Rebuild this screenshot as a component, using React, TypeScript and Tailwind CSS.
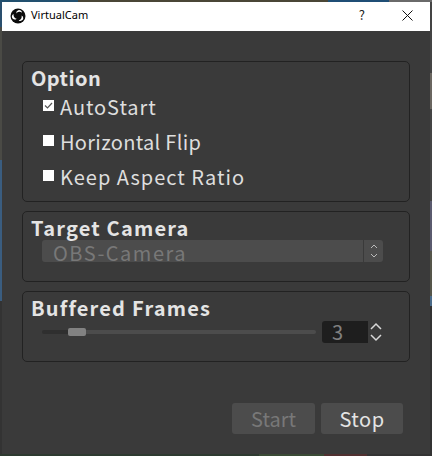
import React from "react";

const font = { fontFamily: '"Noto Sans CJK JP", "Noto Sans", sans-serif' };

function Check({ checked, label, tracking }: { checked?: boolean; label: string; tracking: string }) {
  return (
    <div className="flex items-center h-[35px]">
      <div className="w-[11px] h-[11px] bg-white mr-[6px] flex items-center justify-center shrink-0">
        {checked && (
          <svg width="9" height="9" viewBox="0 0 9 9" fill="none">
            <path d="M1 4.5 L3.5 7 L8 2" stroke="#555" strokeWidth="1.2" />
          </svg>
        )}
      </div>
      <span className={"text-[20px] text-[#dedede] leading-none mt-[2px] " + tracking}>{label}</span>
    </div>
  );
}

function Group({ title, className, tracking, children }: { title: string; className: string; tracking: string; children: React.ReactNode }) {
  return (
    <div className={"border border-[#222222] rounded-[5px] mx-[20px] pl-[8px] " + className}>
      <div className={"text-[20px] font-bold leading-none text-[#e4e4e4] pt-[6px] " + tracking}>{title}</div>
      {children}
    </div>
  );
}

export default function App() {
  return (
    <div
      className="w-[432px] h-[456px] p-[2px] overflow-hidden [background:linear-gradient(90deg,#22506f_0_18%,#4a4636_18%_76%,#1f4e75_76%_90%,#6a6a6a_90%)_top/100%_2px_no-repeat,linear-gradient(90deg,#2e3a30_0_60%,#3a4a35_60%_75%,#503030_75%_85%,#333_85%)_bottom/100%_2px_no-repeat,linear-gradient(180deg,#2a4f6e_0_6%,#4a4a45_6%_35%,#3a5d80_35%_66%,#333333_66%)_left/2px_100%_no-repeat,linear-gradient(180deg,#444_0_16%,#6a6660_16%_24%,#444_24%_44%,#5a5a6e_44%_55%,#55554a_55%_65%,#4a6a88_65%_67%,#333_67%)_right/2px_100%_no-repeat]"
      style={font}
    >
      <div className="w-[428px] h-[452px] bg-[#3a3a3a] flex flex-col">
        <div className="h-[29px] bg-white flex items-center shrink-0">
          <svg className="ml-[8px] mb-[2px]" width="16" height="16" viewBox="0 0 16 16">
            <circle cx="8" cy="8" r="7.5" fill="#0c0c0c" />
            <path d="M8.2 2.2a3 3 0 0 1 3.9 2.6 3.8 3.8 0 0 0-5.8 0.7A3 3 0 0 1 8.2 2.2z" fill="#fff" />
            <path d="M13.3 10.2a3 3 0 0 1-4.6 2.2 3.8 3.8 0 0 0 2.8-5 3 3 0 0 1 1.8 2.8z" fill="#fff" />
            <path d="M2.8 10.8a3 3 0 0 1 0.9-4.9 3.8 3.8 0 0 0 3 4.8 3 3 0 0 1-3.9 0.1z" fill="#fff" />
          </svg>
          <span className="ml-[5px] text-[11px] text-black mb-[2px]" style={{ fontFamily: '"Noto Sans", sans-serif' }}>VirtualCam</span>
          <span className="ml-auto mr-[37px] text-[13px] text-[#222] mb-[3px]">?</span>
          <svg className="mr-[17px] mb-[3px]" width="11" height="11" viewBox="0 0 11 11">
            <path d="M0.5 0.5 L10.5 10.5 M10.5 0.5 L0.5 10.5" stroke="#111" strokeWidth="1" />
          </svg>
        </div>

        <div className="pt-[30px] flex flex-col">
          <Group title="Option" tracking="tracking-[0.45px]" className="h-[141px]">
            <div className="pl-[12px]">
              <Check checked label="AutoStart" tracking="tracking-[0.9px]" />
              <Check label="Horizontal Flip" tracking="tracking-[0.3px]" />
              <Check label="Keep Aspect Ratio" tracking="tracking-[1px]" />
            </div>
          </Group>

          <Group title="Target Camera" tracking="tracking-[1.2px]" className="h-[71px] mt-[9px]">
            <div className="ml-[11px] mt-[2px] w-[341px] h-[22px] bg-[#4c4c4c] rounded-[3px] flex items-center">
              <span className="flex-1 pl-[11px] pt-[3px] text-[20px] leading-none text-[#787878] tracking-[1.5px]">OBS-Camera</span>
              <div className="w-[20px] h-full border-l border-[#3a3a3a] flex items-center justify-center">
                <svg width="8" height="16" viewBox="0 0 8 16" fill="none" stroke="#bbb" strokeWidth="1">
                  <path d="M1 5 L4 2 L7 5 M1 11 L4 14 L7 11" />
                </svg>
              </div>
            </div>
          </Group>

          <Group title="Buffered Frames" tracking="tracking-[1.2px]" className="h-[71px] mt-[9px]">
            <div className="flex items-center mt-[3px]">
              <div className="ml-[11px] w-[274px] h-[4px] flex relative">
                <div className="w-[26px] bg-[#2f2f2f] rounded-l-full" />
                <div className="flex-1 bg-[#4c4c4c] rounded-r-full" />
                <div className="absolute left-[26px] top-[-2px] w-[18px] h-[8px] bg-[#828282] rounded-[2px]" />
              </div>
              <div className="ml-[6px] w-[46px] h-[22px] bg-[#1e1e1e] rounded-l-[3px] flex items-center pl-[10px] text-[20px] leading-none text-[#808080]">3</div>
              <svg width="14" height="22" viewBox="0 0 14 22" fill="none" stroke="#d8d8d8" strokeWidth="1.5" className="ml-[1px]">
                <path d="M2 8 L7 3 L12 8 M2 14 L7 19 L12 14" />
              </svg>
            </div>
          </Group>

          <div className="flex justify-end mx-[27px] mt-[41px] gap-[6px]">
            <div className="w-[83px] h-[31px] bg-[#4c4c4c] rounded-[3px] flex items-center justify-center text-[20px] leading-none text-[#787878]">Start</div>
            <div className="w-[82px] h-[31px] bg-[#4c4c4c] rounded-[3px] flex items-center justify-center text-[20px] leading-none text-[#e4e4e4] tracking-[0.5px]">Stop</div>
          </div>
        </div>
      </div>
    </div>
  );
}
